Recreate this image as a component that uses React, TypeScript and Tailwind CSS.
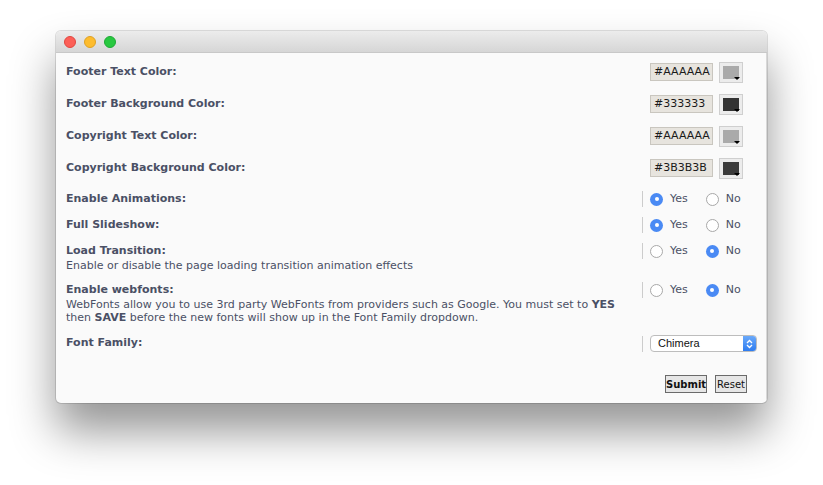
import React from "react";

const font = { fontFamily: '"DejaVu Sans", Verdana, sans-serif' };

function ColorRow({ label, hex, swatch }: { label: string; hex: string; swatch: string }) {
  return (
    <div className="flex h-[32px] items-center">
      <div className="flex-1 pl-[10px] text-[11px] font-bold text-[#4a5065]">{label}</div>
      <div className="flex w-[124px] items-center pl-[8px]">
        <div className="flex h-[18px] w-[63px] items-center border border-[#c9c6bf] bg-[#e7e4de] pl-[3px] text-[11px] text-[#1a1a1a]">
          {hex}
        </div>
        <div className="relative ml-[6px] h-[21px] w-[24px] border border-[#cfcfcf] bg-[#ececec] p-[3px]">
          <div className="h-full w-full" style={{ backgroundColor: swatch }} />
          <div className="absolute bottom-[2px] right-[2px] h-0 w-0 border-x-[3px] border-t-[3px] border-x-transparent border-t-black" />
        </div>
      </div>
    </div>
  );
}

function Radio({ on }: { on: boolean }) {
  return on ? (
    <span className="flex h-[13px] w-[13px] items-center justify-center rounded-full bg-[#4a8af4]">
      <span className="h-[4px] w-[4px] rounded-full bg-white" />
    </span>
  ) : (
    <span className="h-[13px] w-[13px] rounded-full border border-[#a8a8a8] bg-white" />
  );
}

function RadioRow({
  label,
  yes,
  className,
  children,
}: {
  label: string;
  yes: boolean;
  className: string;
  children?: React.ReactNode;
}) {
  return (
    <div className={`flex items-start ${className}`}>
      <div className="flex-1 pl-[10px] text-[#4a5065]">
        <div className="text-[11px] font-bold leading-[16px]">{label}</div>
        {children}
      </div>
      <div className="flex w-[124px]">
        <div className="flex h-[16px] items-center border-l border-[#cccccc] pl-[7px] text-[11px] text-[#4a5065]">
          <Radio on={yes} />
          <span className="ml-[7px]">Yes</span>
          <span className="ml-[18px] flex items-center">
            <Radio on={!yes} />
          </span>
          <span className="ml-[7px]">No</span>
        </div>
      </div>
    </div>
  );
}

export default function App() {
  return (
    <div className="min-h-screen bg-white pl-[56px] pt-[31px]" style={font}>
      <div className="w-[711px] overflow-hidden rounded-[5px] bg-[#fafafa] shadow-[0_0_0_1px_rgba(0,0,0,0.12),0_28px_45px_rgba(0,0,0,0.42)]">
        <div className="flex h-[22px] items-center gap-[8px] border-b border-[#c8c8c8] bg-gradient-to-b from-[#ececec] to-[#d6d6d6] pl-[8px]">
          <span className="h-[12px] w-[12px] rounded-full border border-[#e0463f] bg-[#fc5f57]" />
          <span className="h-[12px] w-[12px] rounded-full border border-[#dea124] bg-[#fdbc2e]" />
          <span className="h-[12px] w-[12px] rounded-full border border-[#1ea934] bg-[#28c840]" />
        </div>

        <div className="border-r border-[#d8d8d8] pb-[10px] pt-[3px]">
          <ColorRow label="Footer Text Color:" hex="#AAAAAA" swatch="#aaaaaa" />
          <ColorRow label="Footer Background Color:" hex="#333333" swatch="#333333" />
          <ColorRow label="Copyright Text Color:" hex="#AAAAAA" swatch="#aaaaaa" />
          <ColorRow label="Copyright Background Color:" hex="#3B3B3B" swatch="#3b3b3b" />

          <RadioRow label="Enable Animations:" yes className="mt-[7px]" />
          <RadioRow label="Full Slideshow:" yes className="mt-[10px]" />
          <RadioRow label="Load Transition:" yes={false} className="mt-[10px]">
            <div className="text-[11px] leading-[13px]">
              Enable or disable the page loading transition animation effects
            </div>
          </RadioRow>
          <RadioRow label="Enable webfonts:" yes={false} className="mt-[10px]">
            <div className="text-[11px] leading-[13px]">
              WebFonts allow you to use 3rd party WebFonts from providers such as Google. You must set to{" "}
              <b>YES</b>
              <br />
              then <b>SAVE</b> before the new fonts will show up in the Font Family dropdown.
            </div>
          </RadioRow>

          <div className="mt-[11px] flex items-center">
            <div className="flex-1 pl-[10px] text-[11px] font-bold text-[#4a5065]">Font Family:</div>
            <div className="flex w-[124px] items-center">
              <div className="h-[16px] border-l border-[#cccccc]" />
              <div
                className="ml-[7px] flex h-[17px] w-[107px] items-center overflow-hidden rounded-[4px] border border-[#bdbdbd] bg-white"
                style={{ fontFamily: '"Liberation Sans", Arial, sans-serif' }}
              >
                <span className="flex-1 pl-[7px] text-[11px] text-[#111]">Chimera</span>
                <span className="flex h-full w-[13px] items-center justify-center bg-gradient-to-b from-[#6aa9fa] to-[#2d7cf0]">
                  <svg width="7" height="10" viewBox="0 0 7 10" fill="none" stroke="white" strokeWidth="1.3">
                    <path d="M1 4 L3.5 1.5 L6 4" />
                    <path d="M1 6 L3.5 8.5 L6 6" />
                  </svg>
                </span>
              </div>
            </div>
          </div>

          <div className="mt-[23px] flex">
            <div className="flex-1" />
            <div className="flex w-[124px] gap-[8px] pl-[23px]">
              <button className="h-[18px] w-[42px] border border-[#6a6a6a] bg-[#e6e6e6] text-[10px] font-bold text-[#111]">
                Submit
              </button>
              <button className="h-[18px] w-[32px] border border-[#6a6a6a] bg-[#e6e6e6] text-[10px] text-[#111]">
                Reset
              </button>
            </div>
          </div>
        </div>
      </div>
    </div>
  );
}
